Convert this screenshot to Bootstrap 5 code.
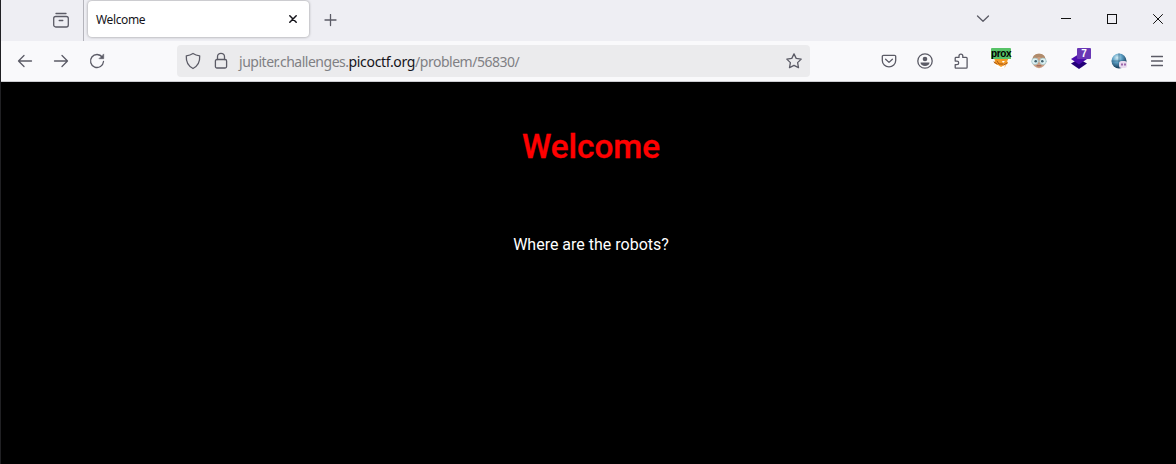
<!DOCTYPE html>
<html lang="en">
<head>
<meta charset="utf-8">
<title>Welcome</title>
<link href="https://cdn.jsdelivr.net/npm/bootstrap@5.3.0/dist/css/bootstrap.min.css" rel="stylesheet">
<style>
body{background:#000;height:464px;overflow:hidden;font-family:"Noto Sans","Open Sans",sans-serif}
.window{height:464px;border-left:1px solid #202023}
.tabstrip{height:41px;background:#eeeef3;color:#5b5b66;overflow:hidden}
.view-cell{width:83px;height:41px;border-right:1px solid #b4b4bb;padding-left:52px}
.tab{width:221px;height:36px;margin:1px 0 0 4px;border-radius:4px;background:#fff;box-shadow:0 0 3px rgba(0,0,0,.4);color:#15141a;padding:0 12px 0 8px;font-size:12px}
.tab span{letter-spacing:-.38px;padding-top:1px}
.plus{width:42px}
.chevron{margin-right:53px}
.win-btn{width:46px;color:#111}
.win-btns{margin-right:-5px}
.toolbar{height:41px;background:#f9f9fb;border-bottom:1px solid #ccccd0;color:#5b5b66;padding:0 1px 0 6px}
.tool{width:36px;height:36px}
.ext{width:38px;height:36px}
.ext-first{margin-left:3px}
.ext-wide{width:40px}
.ext-layers{margin-left:1px}
.urlbar{width:633px;height:32px;margin-left:62px;border-radius:4px;background:#ebebed;padding:0 8px}
.lock{margin-left:12px}
.url{font-size:14px;color:#808084;white-space:nowrap;margin-left:10px;margin-top:1px;line-height:20px;letter-spacing:-.48px}
.url b{font-weight:400;color:#15141a;letter-spacing:-.34px}
.tag{position:absolute;font-family:"Liberation Sans",sans-serif;font-weight:700;white-space:nowrap}
.tag-prox{left:9px;top:5px;width:20px;height:11px;background:#57c267;color:#000;font-size:10px;line-height:11px;letter-spacing:-.4px;text-align:center;border-radius:1px 1px 0 0}
.tag-seven{left:18px;top:5px;width:14px;height:11px;background:#6937b5;color:#fff;font-size:10px;line-height:11px;text-align:center;border-radius:1px}
svg{display:block;flex:none;fill:none;stroke:currentColor;stroke-width:1.3;stroke-linecap:round;stroke-linejoin:round}
svg.art{stroke:none}
main{font-family:Roboto,sans-serif;padding-top:45px;padding-left:5px}
main h1{font-size:33.3px;line-height:40px;font-weight:500;color:#f00;margin:0 0 68px;-webkit-text-stroke:.35px #f00}
main p{font-size:16px;line-height:20px;color:#fff;margin:0}
</style>
</head>
<body>
<div class="window">
  <header>
    <div class="tabstrip d-flex align-items-start">
      <div class="view-cell d-flex align-items-center">
        <svg width="16" height="18" viewBox="0 0 16 18"><path d="M3 1.500h10"/><rect x=".7" y="4.500" width="14.600" height="10.500" rx="2"/><path d="M6.200 8.500h3.600"/></svg>
      </div>
      <div class="tab d-flex align-items-center justify-content-between">
        <span>Welcome</span>
        <svg width="8" height="8" viewBox="0 0 8 8" style="stroke-width:1.5"><path d="M.8.8l6.400 6.400M7.200.8L.8 7.200"/></svg>
      </div>
      <div class="plus h-100 d-flex align-items-center justify-content-center">
        <svg width="13" height="13" viewBox="0 0 13 13"><path d="M6.500 .5v11M1 6h11"/></svg>
      </div>
      <div class="win-btns ms-auto h-100 d-flex align-items-center">
        <svg class="chevron" width="14" height="11" viewBox="0 0 14 11"><path d="M1.500 1L7 6.300 12.500 1"/></svg>
        <div class="win-btn d-flex justify-content-center"><svg width="10" height="11" viewBox="0 0 10 11" shape-rendering="crispEdges" style="stroke-width:1"><path d="M0 3.500h10" stroke-linecap="butt"/></svg></div>
        <div class="win-btn d-flex justify-content-center"><svg width="10" height="14" viewBox="0 0 10 14" shape-rendering="crispEdges" style="stroke-width:1"><path d="M.5.5h9v9h-9z"/></svg></div>
        <div class="win-btn d-flex justify-content-center"><svg width="10" height="13" viewBox="0 0 10 13" style="stroke-width:1"><path d="M.5.5l9 9M9.500.5l-9 9"/></svg></div>
      </div>
    </div>
    <nav class="toolbar d-flex align-items-center">
      <div class="tool d-flex align-items-center justify-content-center"><svg width="16" height="16" viewBox="0 0 16 16"><path d="M14.500 8H1.500M7 2.500L1.500 8 7 13.500"/></svg></div>
      <div class="tool d-flex align-items-center justify-content-center"><svg width="16" height="16" viewBox="0 0 16 16"><path d="M1.500 8h13M9 2.500L14.500 8 9 13.500"/></svg></div>
      <div class="tool d-flex align-items-center justify-content-center"><svg width="16" height="16" viewBox="0 0 16 16"><path d="M13.300 4.200A6.500 6.500 0 1 0 14.500 8.500"/><path d="M14.700 1.300v4.400h-4.400z" fill="currentColor" stroke-width=".6"/></svg></div>
      <div class="urlbar d-flex align-items-center">
        <svg width="16" height="18" viewBox="0 0 16 18"><path d="M8 1.500c2 1.300 4.100 2 6.700 2.400C15 9 13 14 8 16.500 3 14 1 9 1.300 3.900 3.900 3.500 6 2.800 8 1.500z"/></svg>
        <svg class="lock" width="16" height="18" viewBox="0 0 16 18"><rect x="2.400" y="7.500" width="11.200" height="8.500" rx="1.500"/><path d="M4.500 7.500V4.800a3.500 3.500 0 0 1 7 0v2.700"/></svg>
        <span class="url">jupiter.challenges.<b>picoctf.org</b>/problem/56830/</span>
        <svg class="ms-auto" width="16" height="16" viewBox="0 0 16 16"><path d="M8 .9l2.200 4.500 5 .7-3.600 3.500.9 5L8 12.300l-4.500 2.300.9-5L.8 6.100l5-.7z"/></svg>
      </div>
      <div class="ms-auto d-flex align-items-center">
        <div class="tool d-flex align-items-center justify-content-center"><svg width="16" height="16" viewBox="0 0 16 16"><path d="M2.500 2.300h11a1.200 1.200 0 0 1 1.200 1.200V7.500a6.700 6.300 0 0 1-13.400 0V3.500a1.200 1.200 0 0 1 1.200-1.200z"/><path d="M4.600 6.200L8 9.400l3.400-3.200"/></svg></div>
        <div class="tool d-flex align-items-center justify-content-center"><svg width="16" height="16" viewBox="0 0 16 16"><circle cx="8" cy="8" r="7.200"/><circle cx="8" cy="6" r="2.300" fill="currentColor" stroke="none"/><path d="M3.500 9.500h9c0 2-2 3.500-4.500 3.500S3.500 11.500 3.500 9.500z" fill="currentColor" stroke="none"/></svg></div>
        <div class="tool d-flex align-items-center justify-content-center"><svg width="16" height="16" viewBox="0 0 16 16"><path d="M2.200 5.200q0-.8.800-.8H6V3a1.900 1.900 0 0 1 3.800 0v1.400h3.400q.9 0 .9.900v9q0 .9-.9.900H3q-.8 0-.8-.8v-2.700h1.700a1.800 1.800 0 0 0 0-3.600H2.200z"/></svg></div>
        <div class="ext ext-first position-relative d-flex align-items-center justify-content-center">
          <svg class="art" width="16" height="16" viewBox="0 0 16 16"><path d="M1 5h14v2l-1 1 1 2-2 2-1 2-4 2-4-2-1-3-2-1 1-2z" fill="#f49b27"/><path d="M2 11l3 1 3 2 5-3-2 4-3 1-4-1z" fill="#fff"/><path d="M1 9l3 2M14 10l-3 2M4 8l2 3 4 0" stroke="#a65310" stroke-width="1"/><path d="M9 8l3 0-2 2z" fill="#fff"/></svg>
          <span class="tag tag-prox">prox</span>
        </div>
        <div class="ext d-flex align-items-center justify-content-center">
          <svg class="art" width="16" height="16" viewBox="0 0 16 16"><ellipse cx="8" cy="8" rx="6.800" ry="7.200" fill="#cb9f82"/><path d="M1.500 6C2 2 5 .7 8 .7S14 2 14.500 6L8 4z" fill="#b08b6b"/><circle cx="4" cy="8.300" r="3.300" fill="#dff2f3" stroke="#a5c4c8" stroke-width=".8"/><circle cx="12" cy="8.300" r="3.300" fill="#dff2f3" stroke="#a5c4c8" stroke-width=".8"/><circle cx="4.700" cy="8.300" r="1.300" fill="#416370"/><circle cx="11.300" cy="8.300" r="1.300" fill="#416370"/><path d="M6 12.800h4" stroke="#94584e" stroke-width="1"/></svg>
        </div>
        <div class="ext ext-wide ext-layers position-relative d-flex align-items-center justify-content-center">
          <svg class="art" width="18" height="18" viewBox="0 0 18 18"><path d="M1 11.500L9 7l8 4.500L9 17z" fill="#240078"/><path d="M1 7l8-5 8 5-8 5.500z" fill="#4a0cac"/></svg>
          <span class="tag tag-seven">7</span>
        </div>
        <div class="ext ext-wide d-flex align-items-center justify-content-center">
          <svg class="art" width="17" height="17" viewBox="0 0 17 17"><defs><radialGradient id="globe" cx=".38" cy=".28" r=".7"><stop offset="0" stop-color="#d3edf5"/><stop offset=".45" stop-color="#5c9fc4"/><stop offset="1" stop-color="#173b59"/></radialGradient></defs><circle cx="8" cy="8" r="7.500" fill="url(#globe)"/><path d="M8 .7v14M1 8h14" stroke="#24516e" stroke-width=".5"/><rect x="8" y="8" width="8" height="7" rx="2.500" fill="#e8daee"/><path d="M10 10.500h2v2h-2zM13 10.500h2v2h-2z" fill="#9c68ac"/></svg>
        </div>
        <div class="tool d-flex align-items-center justify-content-center"><svg width="12" height="12" viewBox="0 0 12 12"><path d="M.5 1.500h11M.5 6h11M.5 10.500h11"/></svg></div>
      </div>
    </nav>
  </header>
  <main class="text-center">
    <h1>Welcome</h1>
    <p>Where are the robots?</p>
  </main>
</div>
<script src="https://cdn.jsdelivr.net/npm/bootstrap@5.3.0/dist/js/bootstrap.bundle.min.js"></script>
</body>
</html>
